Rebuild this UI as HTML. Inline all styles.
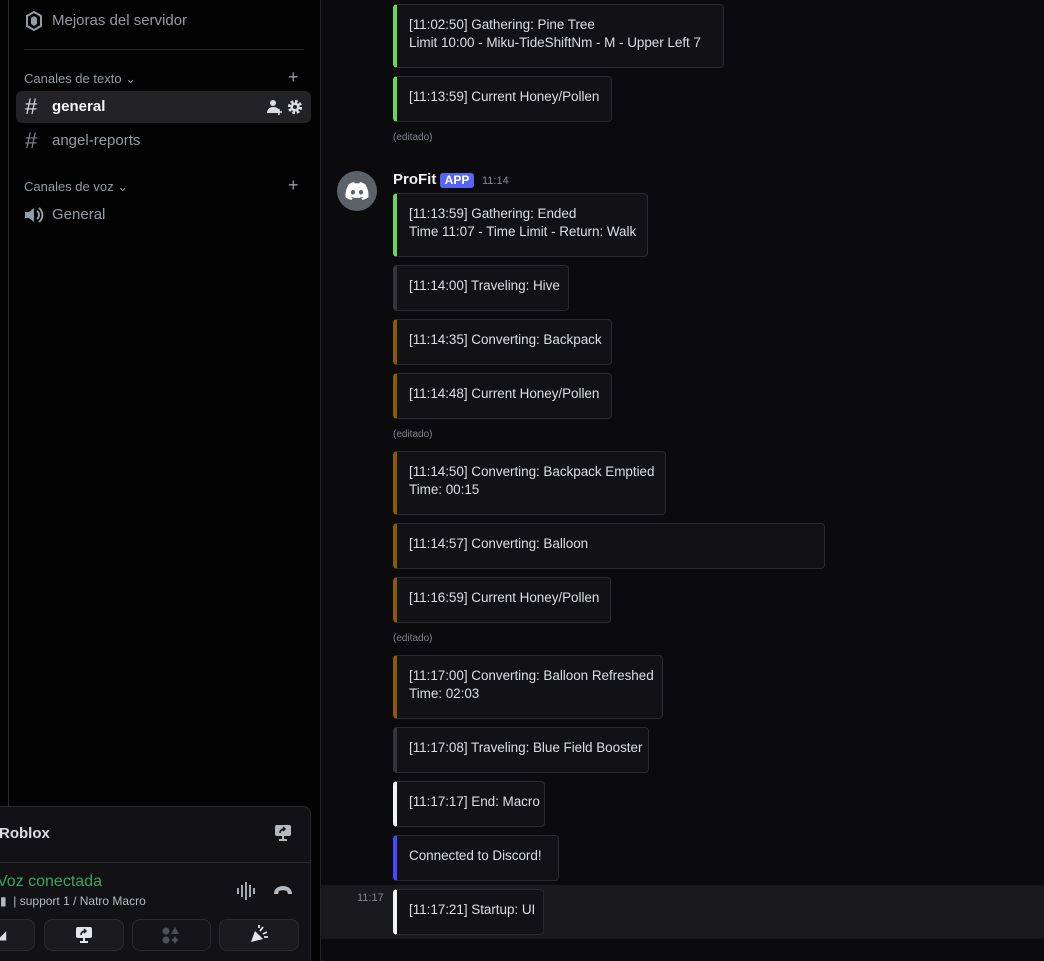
<!DOCTYPE html>
<html style="overflow:hidden;width:1044px;height:961px"><head><meta charset="utf-8"><style>
*{box-sizing:border-box;margin:0;padding:0}
body{width:1044px;height:961px;overflow:hidden;background:#0b0b0d;font-family:"Liberation Sans",sans-serif;position:relative;color:#dbdee1}
.a{position:absolute}
#side{left:0;top:0;width:321px;height:961px;background:#030303;border-right:1px solid #232326}
.vl{left:8px;top:0;width:1px;height:806px;background:#2a2a2c}
.ch{font-size:15px;color:#949ba4}
.cat{font-size:13px;color:#949ba4}
.plus{font-size:18px;color:#949ba4;font-weight:300}
.e{position:absolute;left:393px;background:#121214;border:1px solid #2b2b2f;border-left:4px solid;border-radius:4px;padding:11px 10px 0 12px;font-size:13.5px;letter-spacing:-0.05px;line-height:18px;color:#dbdee1;white-space:nowrap;overflow:hidden}
.g{border-left-color:#6bd35a}.b{border-left-color:#8a5a00}.k{border-left-color:#35353a}.w{border-left-color:#f2f3f5}.bl{border-left-color:#4848ff}
.ed{position:absolute;left:393px;font-size:10px;color:#80848e}
.btn{position:absolute;top:919px;height:32px;background:#1b1b1e;border:1px solid #2b2b2f;border-radius:8px}
</style></head><body>
<div id="side" class="a"></div>
<div class="a vl"></div>
<svg class="a" style="left:26px;top:11px" width="16" height="20" viewBox="0 0 16 20"><path d="M8 1 L15 5 V15 L8 19 L1 15 V5 Z" fill="none" stroke="#949ba4" stroke-width="2"/><path d="M8 5 L11 7 V13 L8 15 L5 13 V7Z" fill="#949ba4"/></svg>
<div class="a ch" style="left:52px;top:12px">Mejoras del servidor</div>
<div class="a" style="left:24px;top:49px;width:280px;height:1px;background:#2a2a2d"></div>
<div class="a cat" style="left:24px;top:71px">Canales de texto ⌄</div>
<div class="a plus" style="left:288px;top:67px">+</div>
<div class="a" style="left:16px;top:91px;width:295px;height:32px;background:#232326;border-radius:6px"></div>
<div class="a" style="left:25px;top:94px;font-size:22px;color:#dbdee1">#</div>
<div class="a" style="left:52px;top:98px;font-size:15px;font-weight:bold;color:#f2f3f5">general</div>
<svg class="a" style="left:267px;top:99px" width="16" height="16" viewBox="0 0 16 16"><circle cx="6" cy="4" r="3" fill="#dbdee1"/><path d="M0 14c0-4 3-6 6-6s5 1 6 3v3z" fill="#dbdee1"/><path d="M12 10v6M9 13h6" stroke="#dbdee1" stroke-width="1.6"/></svg>
<svg class="a" style="left:287px;top:99px" width="16" height="16" viewBox="0 0 16 16"><circle cx="8" cy="8" r="5.5" fill="none" stroke="#dbdee1" stroke-width="3.2" stroke-dasharray="2.6 1.7"/><circle cx="8" cy="8" r="4.5" fill="#dbdee1"/><circle cx="8" cy="8" r="2" fill="#232326"/></svg>
<div class="a" style="left:25px;top:128px;font-size:22px;color:#80848e">#</div>
<div class="a ch" style="left:52px;top:132px">angel-reports</div>
<div class="a cat" style="left:24px;top:179px">Canales de voz ⌄</div>
<div class="a plus" style="left:288px;top:175px">+</div>
<svg class="a" style="left:24px;top:206px" width="20" height="18" viewBox="0 0 20 18"><path d="M1 6h4l5-4v14l-5-4H1z" fill="#949ba4"/><path d="M13 5a5 5 0 0 1 0 8M15 2a9 9 0 0 1 0 14" stroke="#949ba4" stroke-width="2" fill="none"/></svg>
<div class="a ch" style="left:52px;top:206px">General</div>

<div class="a" style="left:-10px;top:806px;width:321px;height:170px;background:#121214;border:1px solid #2b2b2f;border-radius:8px"></div>
<div class="a" style="left:0;top:862px;width:311px;height:1px;background:#2b2b2f"></div>
<div class="a" style="left:-1px;top:825px;font-size:15px;font-weight:bold;color:#dbdee1">Roblox</div>
<svg class="a" style="left:274px;top:824px" width="18" height="18" viewBox="0 0 18 18"><rect x="1" y="1" width="16" height="11" rx="2" fill="#b5bac1"/><path d="M9 12v4M5 16h8" stroke="#b5bac1" stroke-width="2"/><path d="M6 9c0-3 2-4 5-4M9 3l2 2-2 2" stroke="#121214" stroke-width="1.5" fill="none"/></svg>
<div class="a" style="left:-3px;top:873px;font-size:16px;color:#3ba55c">Voz conectada</div>
<div class="a" style="left:0;top:894px;font-size:12px;color:#b5bac1">▮&nbsp;&nbsp;|&nbsp;support 1 / Natro Macro</div>
<svg class="a" style="left:236px;top:882px" width="22" height="18" viewBox="0 0 22 18"><path d="M2 6v6M6 3v12M10 0v18M14 3v12M18 6v6" stroke="#b5bac1" stroke-width="1.8"/></svg>
<svg class="a" style="left:273px;top:884px" width="20" height="12" viewBox="0 0 20 12"><path d="M1 10c0-5 4-8 9-8s9 3 9 8l-4 0-1-3c-3-1-5-1-8 0l-1 3z" fill="#b5bac1"/></svg>
<div class="btn" style="left:-10px;width:45px"></div>
<div class="btn" style="left:44px;width:80px"></div>
<div class="btn" style="left:132px;width:79px;background:#151517"></div>
<div class="btn" style="left:219px;width:80px"></div>
<svg class="a" style="left:75px;top:926px" width="18" height="18" viewBox="0 0 18 18"><rect x="1" y="1" width="16" height="11" rx="2" fill="#e3e5e8"/><path d="M9 12v4M5 16h8" stroke="#e3e5e8" stroke-width="2"/><path d="M6 9c0-3 2-4 5-4M9 3l2 2-2 2" stroke="#1b1b1e" stroke-width="1.5" fill="none"/></svg>
<svg class="a" style="left:162px;top:926px" width="18" height="18" viewBox="0 0 18 18" fill="#4e5058"><circle cx="4" cy="5" r="3.5"/><path d="M13 1l4 7h-8z"/><circle cx="4" cy="14" r="3.5"/><path d="M13 10l1.5 2.5L17 14l-2.5 1.5L13 18l-1.5-2.5L9 14l2.5-1.5z"/></svg>
<svg class="a" style="left:249px;top:925px" width="20" height="20" viewBox="0 0 20 20"><path d="M2 17l4-11 8 8z" fill="#e3e5e8"/><path d="M11 6l3-4M14 9l4-2M15 12l4 0M10 3l0-3" stroke="#e3e5e8" stroke-width="1.8"/></svg>
<div class="a" style="left:-3px;top:928px;font-size:12px;color:#dbdee1">◢</div>

<div class="e g" style="top:4px;width:331px;height:64px">[11:02:50] Gathering: Pine Tree<br>Limit 10:00 - Miku-TideShiftNm - M - Upper Left 7</div>
<div class="e g" style="top:76px;width:219px;height:46px">[11:13:59] Current Honey/Pollen</div>
<div class="ed" style="top:132px">(editado)</div>
<div class="a" style="left:337px;top:171px;width:40px;height:40px;border-radius:50%;background:#5d6169"></div>
<svg class="a" style="left:345px;top:182px" width="24" height="18" viewBox="0 0 24 18"><path d="M20 2A19 19 0 0 0 15 0l-.7 1.4a18 18 0 0 0-4.6 0L9 0A19 19 0 0 0 4 2C1 6.5.2 11 .6 15.4A20 20 0 0 0 6.5 18l1.2-2a12 12 0 0 1-1.9-.9l.5-.4a14 14 0 0 0 11.4 0l.5.4-1.9.9 1.2 2a20 20 0 0 0 5.9-2.6C23.9 10.3 22.8 6 20 2zM8 12.6c-1.2 0-2.1-1-2.1-2.3S6.8 8 8 8s2.2 1 2.1 2.3c0 1.3-.9 2.3-2.1 2.3zm8 0c-1.2 0-2.1-1-2.1-2.3S14.8 8 16 8s2.2 1 2.1 2.3c0 1.3-.9 2.3-2.1 2.3z" fill="#fff"/></svg>
<div class="a" style="left:393px;top:171px;font-size:15px;font-weight:bold;color:#f2f3f5">ProFit</div>
<div class="a" style="left:440px;top:173px;width:34px;height:15px;background:#5865f2;border-radius:3px;font-size:12px;font-weight:bold;color:#fff;text-align:center;line-height:15px">APP</div>
<div class="a" style="left:482px;top:175px;font-size:11px;color:#80848e">11:14</div>
<div class="e g" style="top:193px;width:255px;height:64px">[11:13:59] Gathering: Ended<br>Time 11:07 - Time Limit - Return: Walk</div>
<div class="e k" style="top:265px;width:176px;height:46px">[11:14:00] Traveling: Hive</div>
<div class="e b" style="top:319px;width:219px;height:46px">[11:14:35] Converting: Backpack</div>
<div class="e b" style="top:373px;width:219px;height:46px">[11:14:48] Current Honey/Pollen</div>
<div class="ed" style="top:429px">(editado)</div>
<div class="e b" style="top:451px;width:273px;height:64px">[11:14:50] Converting: Backpack Emptied<br>Time: 00:15</div>
<div class="e b" style="top:523px;width:432px;height:46px">[11:14:57] Converting: Balloon</div>
<div class="e b" style="top:577px;width:218px;height:46px">[11:16:59] Current Honey/Pollen</div>
<div class="ed" style="top:633px">(editado)</div>
<div class="e b" style="top:655px;width:270px;height:64px">[11:17:00] Converting: Balloon Refreshed<br>Time: 02:03</div>
<div class="e k" style="top:727px;width:256px;height:46px">[11:17:08] Traveling: Blue Field Booster</div>
<div class="e w" style="top:781px;width:152px;height:46px">[11:17:17] End: Macro</div>
<div class="e bl" style="top:835px;width:166px;height:46px">Connected to Discord!</div>
<div class="a" style="left:321px;top:885px;width:723px;height:54px;background:#1a1a1c"></div>
<div class="a" style="left:357px;top:892px;font-size:11px;color:#80848e">11:17</div>
<div class="e w" style="top:889px;width:151px;height:46px">[11:17:21] Startup: UI</div>
</body></html>
